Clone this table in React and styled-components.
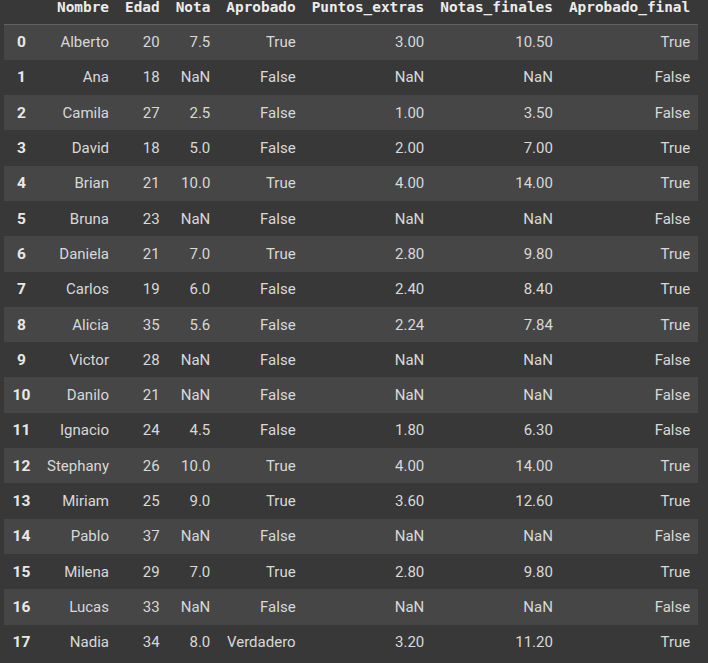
import React from 'react';
import styled, { createGlobalStyle } from 'styled-components';

const GlobalStyle = createGlobalStyle`
  html, body {
    margin: 0;
    padding: 0;
    background: #383838;
  }
`;

const columns = [
  'Nombre',
  'Edad',
  'Nota',
  'Aprobado',
  'Puntos_extras',
  'Notas_finales',
  'Aprobado_final',
];

const rows = [
  ['Alberto', 20, '7.5', 'True', '3.00', '10.50', 'True'],
  ['Ana', 18, 'NaN', 'False', 'NaN', 'NaN', 'False'],
  ['Camila', 27, '2.5', 'False', '1.00', '3.50', 'False'],
  ['David', 18, '5.0', 'False', '2.00', '7.00', 'True'],
  ['Brian', 21, '10.0', 'True', '4.00', '14.00', 'True'],
  ['Bruna', 23, 'NaN', 'False', 'NaN', 'NaN', 'False'],
  ['Daniela', 21, '7.0', 'True', '2.80', '9.80', 'True'],
  ['Carlos', 19, '6.0', 'False', '2.40', '8.40', 'True'],
  ['Alicia', 35, '5.6', 'False', '2.24', '7.84', 'True'],
  ['Victor', 28, 'NaN', 'False', 'NaN', 'NaN', 'False'],
  ['Danilo', 21, 'NaN', 'False', 'NaN', 'NaN', 'False'],
  ['Ignacio', 24, '4.5', 'False', '1.80', '6.30', 'False'],
  ['Stephany', 26, '10.0', 'True', '4.00', '14.00', 'True'],
  ['Miriam', 25, '9.0', 'True', '3.60', '12.60', 'True'],
  ['Pablo', 37, 'NaN', 'False', 'NaN', 'NaN', 'False'],
  ['Milena', 29, '7.0', 'True', '2.80', '9.80', 'True'],
  ['Lucas', 33, 'NaN', 'False', 'NaN', 'NaN', 'False'],
  ['Nadia', 34, '8.0', 'Verdadero', '3.20', '11.20', 'True'],
];

const App = () => {
  return (
    <>
      <GlobalStyle />
      <Wrapper>
        <Table>
          <thead>
            <tr>
              <HeadCell />
              {columns.map((c) => (
                <HeadCell key={c}>{c}</HeadCell>
              ))}
            </tr>
          </thead>
          <tbody>
            {rows.map((r, i) => (
              <Row key={i} $odd={i % 2 === 1}>
                <IndexCell>{i}</IndexCell>
                {r.map((v, j) => (
                  <Cell key={j}>{v}</Cell>
                ))}
              </Row>
            ))}
          </tbody>
        </Table>
      </Wrapper>
    </>
  );
};

export default App;

const Wrapper = styled.div`
  background: #383838;
  width: 708px;
  height: 663px;
  padding-left: 4px;
  box-sizing: border-box;
  overflow: hidden;
`;

const Table = styled.table`
  border-collapse: collapse;
  border-spacing: 0;
  font-family: Roboto, 'Liberation Sans', sans-serif;
  font-size: 15px;
  color: #d8d8d8;
`;

const HeadCell = styled.th`
  height: 24px;
  padding: 0 8px 10px;
  box-sizing: border-box;
  vertical-align: top;
  text-align: right;
  white-space: nowrap;
  font-family: 'DejaVu Sans Mono', 'Liberation Mono', monospace;
  font-weight: bold;
  font-size: 14.4px;
  line-height: 14px;
  color: #ececec;
  border-bottom: 1px solid #616161;
`;

const Row = styled.tr`
  height: 35.3px;
  background: ${(p) => (p.$odd ? '#383838' : '#464646')};
`;

const Cell = styled.td`
  padding: 0 8px;
  text-align: right;
  white-space: nowrap;
  vertical-align: middle;
`;

const IndexCell = styled(Cell)`
  width: 19px;
  text-align: center;
  font-weight: bold;
  font-size: 15.5px;
  color: #e8e8e8;
`;
